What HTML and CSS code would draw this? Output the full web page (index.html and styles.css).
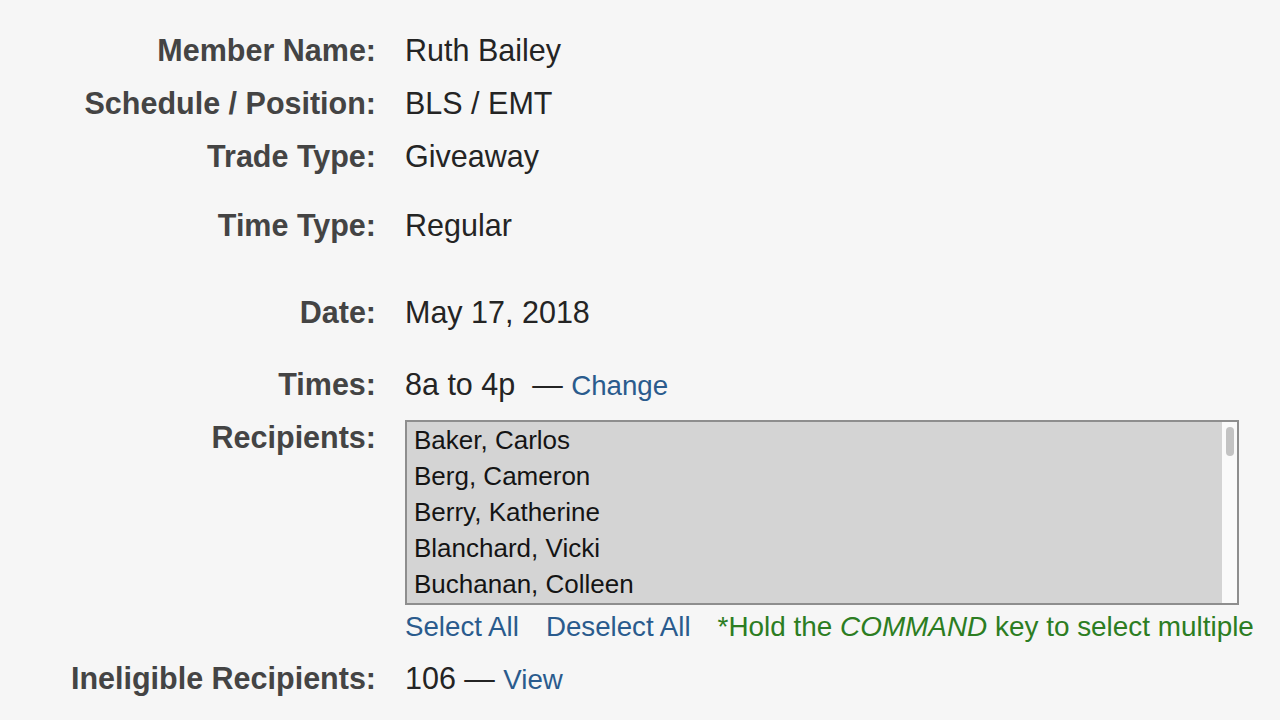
FILE: index.html
```html
<!DOCTYPE html>
<html lang="en">
<head>
<meta charset="utf-8">
<title>Trade Request</title>
<link rel="stylesheet" href="styles.css">
</head>
<body>
<main class="form">
  <div class="row">
    <div class="label">Member Name:</div>
    <div class="value">Ruth Bailey</div>
  </div>
  <div class="row">
    <div class="label">Schedule / Position:</div>
    <div class="value">BLS / EMT</div>
  </div>
  <div class="row row-gap-md">
    <div class="label">Trade Type:</div>
    <div class="value">Giveaway</div>
  </div>
  <div class="row row-gap-lg">
    <div class="label">Time Type:</div>
    <div class="value">Regular</div>
  </div>
  <div class="row row-gap-md2">
    <div class="label">Date:</div>
    <div class="value">May 17, 2018</div>
  </div>
  <div class="row row-gap-sm">
    <div class="label">Times:</div>
    <div class="value">8a to 4p&nbsp; — <a class="link" href="#">Change</a></div>
  </div>
  <div class="row row-recipients">
    <div class="label">Recipients:</div>
    <div class="value">
      <div class="listbox">
        <div class="options">
          <div class="option">Baker, Carlos</div>
          <div class="option">Berg, Cameron</div>
          <div class="option">Berry, Katherine</div>
          <div class="option">Blanchard, Vicki</div>
          <div class="option">Buchanan, Colleen</div>
        </div>
        <div class="scrollbar"><div class="thumb"></div></div>
      </div>
      <div class="list-actions">
        <a class="link" href="#">Select All</a>
        <a class="link" href="#">Deselect All</a>
        <span class="note">*Hold the <em>COMMAND</em> key to select multiple</span>
      </div>
    </div>
  </div>
  <div class="row">
    <div class="label">Ineligible Recipients:</div>
    <div class="value">106 — <a class="link" href="#">View</a></div>
  </div>
</main>
</body>
</html>
```

FILE: styles.css
```css
html, body {
  margin: 0;
  padding: 0;
}

body {
  background: #f6f6f6;
  font-family: "Liberation Sans", Arial, Helvetica, sans-serif;
  color: #242424;
}

.form {
  display: flex;
  flex-direction: column;
  padding-top: 32px;
}

.row {
  display: grid;
  grid-template-columns: 376px 1fr;
  column-gap: 29px;
  align-items: start;
  font-size: 30.5px;
  line-height: 36px;
  margin-bottom: 17px;
}

.row-gap-md {
  margin-bottom: 33px;
}

.row-gap-lg {
  margin-bottom: 51px;
}

.row-gap-md2 {
  margin-bottom: 36px;
}

.row-gap-sm {
  margin-bottom: 15px;
}

.row-recipients {
  margin-bottom: 17px;
}

.label {
  text-align: right;
  font-weight: bold;
  color: #444444;
  white-space: nowrap;
}

.value {
  white-space: nowrap;
}

.link {
  color: #2a5b8d;
  text-decoration: none;
  font-size: 27.7px;
}

.listbox {
  display: flex;
  box-sizing: border-box;
  width: 834px;
  height: 185px;
  margin-top: 1px;
  border: 2px solid #8e8e8e;
  background: #d4d4d4;
}

.options {
  flex: 1;
  overflow: hidden;
  padding-left: 7px;
  font-size: 26px;
  line-height: 36px;
  color: #141414;
}

.scrollbar {
  width: 15px;
  background: #fafafa;
  display: flex;
  justify-content: center;
  padding-top: 5px;
  box-sizing: border-box;
}

.thumb {
  width: 8px;
  height: 29px;
  border-radius: 4px;
  background: #c3c3c3;
}

.list-actions {
  display: flex;
  gap: 27px;
  margin-top: 6px;
  font-size: 27.7px;
  line-height: 32px;
}

.note {
  color: #2c7d22;
  font-size: 27.9px;
}

.note em {
  font-style: italic;
}
```
